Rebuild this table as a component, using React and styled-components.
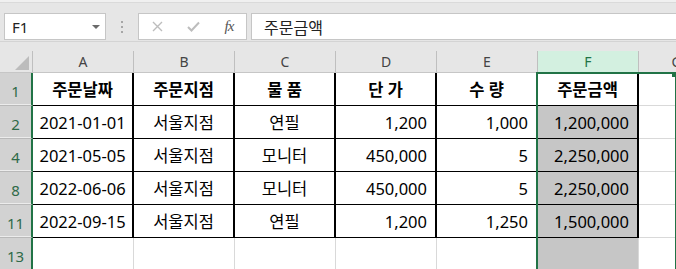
import { Fragment } from "react";
import styled, { createGlobalStyle } from "styled-components";

const GlobalStyle = createGlobalStyle`
  body {
    margin: 0;
    background: #fff;
    overflow: hidden;
    font-family: "Noto Sans", "Noto Sans CJK KR", sans-serif;
  }
`;

const GREEN = "#217346";

//Formula bar
const TopBar = styled.div`
  display: flex;
  align-items: center;
  background: #e6e6e6;
  border-top: 2px solid #f0f0f0;
  border-bottom: 1px solid #d4d4d4;
  box-shadow: inset 0 1px 0 #dadada;
  padding: 11px 0 1px 4px;
`;

const NameBox = styled.div`
  box-sizing: border-box;
  width: 102px;
  height: 27px;
  display: flex;
  align-items: center;
  justify-content: space-between;
  padding: 0 5px 0 7px;
  background: #fff;
  border: 1px solid #c6c6c6;
  font-size: 15px;
  color: #222;
`;

const Arrow = styled.span`
  width: 0;
  height: 0;
  border-left: 4px solid transparent;
  border-right: 4px solid transparent;
  border-top: 4px solid #6a6a6a;
`;

const Grip = styled.div`
  width: 32px;
  display: flex;
  flex-direction: column;
  align-items: center;
  gap: 3px;
`;

const Dot = styled.span`
  width: 2px;
  height: 2px;
  background: #a6a6a6;
`;

const FxBox = styled.div`
  box-sizing: border-box;
  width: 109px;
  height: 27px;
  display: grid;
  grid-template-columns: repeat(3, 36px);
  justify-items: center;
  align-items: center;
  background: #fff;
  border: 1px solid #c6c6c6;
`;

const FxLabel = styled.span`
  font-family: "Liberation Serif", serif;
  font-style: italic;
  font-size: 15px;
  color: #555;
  letter-spacing: -1px;
`;

const FormulaInput = styled.div`
  box-sizing: border-box;
  flex: 1;
  height: 27px;
  margin-left: 4px;
  display: flex;
  align-items: center;
  padding-left: 12px;
  background: #fff;
  border: 1px solid #c6c6c6;
  border-right: none;
  font-size: 16px;
  color: #222;
`;

//Sheet
const SheetArea = styled.div`
  background: #e6e6e6;
  padding-top: 9px;
`;

const Grid = styled.div`
  position: relative;
  display: grid;
  grid-template-columns: 33px repeat(6, 101px) 76px;
  grid-template-rows: 22px repeat(6, 33px);
`;

const Corner = styled.div`
  box-sizing: border-box;
  display: flex;
  align-items: flex-end;
  justify-content: flex-end;
  padding: 0 3px 2px 0;
  background: #e6e6e6;
  border-right: 1px solid #bfbfbf;
  border-bottom: 1px solid #c6c6c6;
`;

const ColHead = styled.div`
  box-sizing: border-box;
  display: flex;
  align-items: center;
  justify-content: center;
  background: ${(p) => (p.$active ? "#d3f0e0" : "#e6e6e6")};
  color: ${(p) => (p.$active ? GREEN : "#444")};
  border-right: 1px solid #bfbfbf;
  border-bottom: 1px solid #c6c6c6;
  font-size: 14px;
`;

const RowHead = styled.div`
  box-sizing: border-box;
  display: flex;
  align-items: flex-end;
  justify-content: center;
  padding-bottom: 4px;
  background: #d2d2d2;
  color: #2f6a48;
  border-right: 2px solid ${GREEN};
  border-bottom: 1px solid #b9b9b9;
  box-shadow: inset 0 -1px 0 #ececec;
  font-size: 15px;
`;

const Cell = styled.div`
  box-sizing: border-box;
  display: flex;
  align-items: center;
  justify-content: ${(p) => (p.$right ? "flex-end" : "center")};
  padding: 0 8px;
  background: ${(p) => (p.$shade ? "#c6c6c6" : "#fff")};
  border-right: ${(p) => (p.$table ? "2px solid #000" : "1px solid #d9d9d9")};
  border-bottom: 1px solid ${(p) => (p.$table ? "#000" : "#d9d9d9")};
  font-weight: ${(p) => (p.$bold ? 700 : 400)};
  font-size: 16.5px;
  color: #000;
  white-space: pre;
`;

const Selection = styled.div`
  position: absolute;
  grid-column: 7;
  grid-row: 2 / -1;
  top: -1px;
  bottom: 0;
  left: -2px;
  right: -1px;
  border: 2px solid ${GREEN};
  border-bottom: none;
  pointer-events: none;
`;

const Handle = styled.span`
  position: absolute;
  top: -2px;
  right: -2px;
  width: 5px;
  height: 5px;
  background: ${GREEN};
`;

const columns = ["A", "B", "C", "D", "E", "F", "G"];

const rows = [
  { n: 1, head: true, cells: ["주문날짜", "주문지점", "물 품", "단 가", "수 량", "주문금액"] },
  { n: 2, cells: ["2021-01-01", "서울지점", "연필", "1,200", "1,000", "1,200,000"] },
  { n: 4, cells: ["2021-05-05", "서울지점", "모니터", "450,000", "5", "2,250,000"] },
  { n: 8, cells: ["2022-06-06", "서울지점", "모니터", "450,000", "5", "2,250,000"] },
  { n: 11, cells: ["2022-09-15", "서울지점", "연필", "1,200", "1,250", "1,500,000"] },
  { n: 13, cells: null },
];

const CloseIcon = () => (
  <svg width="11" height="11" viewBox="0 0 11 11">
    <path d="M1 1L10 10M10 1L1 10" stroke="#bdbdbd" strokeWidth="1.4" fill="none" />
  </svg>
);

const CheckIcon = () => (
  <svg width="13" height="11" viewBox="0 0 13 11">
    <path d="M1 6L4.5 9.5L12 1.5" stroke="#bdbdbd" strokeWidth="2" fill="none" />
  </svg>
);

const CornerMark = () => (
  <svg width="14" height="14" viewBox="0 0 14 14">
    <polygon points="14,0 14,14 0,14" fill="#bcbcbc" />
  </svg>
);

export default function App() {
  return (
    <div>
      <GlobalStyle />
      <TopBar>
        <NameBox>
          F1
          <Arrow />
        </NameBox>
        <Grip>
          <Dot />
          <Dot />
          <Dot />
        </Grip>
        <FxBox>
          <CloseIcon />
          <CheckIcon />
          <FxLabel>fx</FxLabel>
        </FxBox>
        <FormulaInput>주문금액</FormulaInput>
      </TopBar>

      <SheetArea>
        <Grid>
          <Corner>
            <CornerMark />
          </Corner>
          {columns.map((c) => (
            <ColHead key={c} $active={c === "F"}>
              {c}
            </ColHead>
          ))}

          {rows.map((row) => (
            <Fragment key={row.n}>
              <RowHead>{row.n}</RowHead>
              {columns.map((c, i) => {
                const isTable = row.cells && i < 6;
                const text = isTable ? row.cells[i] : "";
                return (
                  <Cell
                    key={c}
                    $table={isTable}
                    $bold={row.head}
                    $right={!row.head && i >= 3}
                    $shade={c === "F" && !row.head}
                  >
                    {text}
                  </Cell>
                );
              })}
            </Fragment>
          ))}

          <Selection>
            <Handle />
          </Selection>
        </Grid>
      </SheetArea>
    </div>
  );
}
